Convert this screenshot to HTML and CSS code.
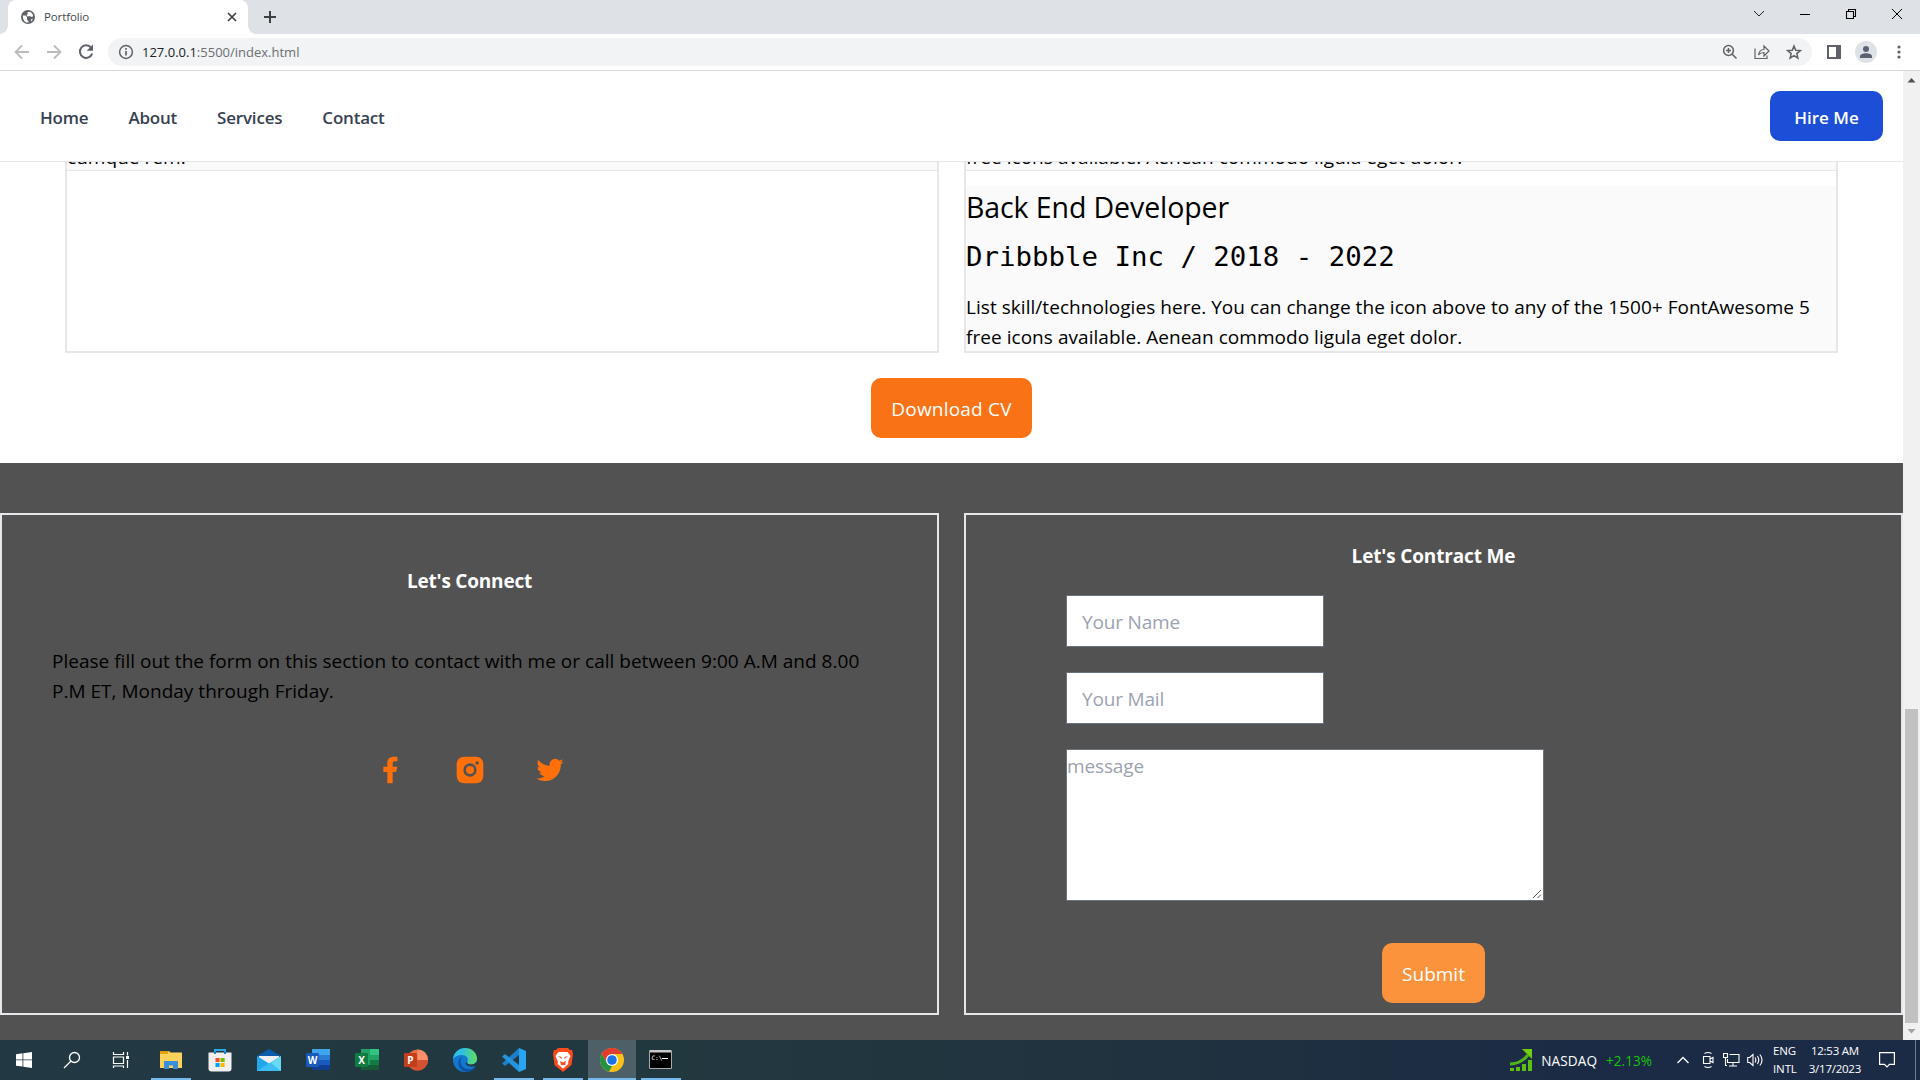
FILE: index.html
```html
<!DOCTYPE html>
<html lang="en">
<head>
<meta charset="utf-8">
<title>Portfolio</title>
<link rel="stylesheet" href="styles.css">
</head>
<body>
<div class="screen">
  <header class="tabs">
    <div class="tab">
      <svg class="globe" width="14" height="14" viewBox="0 0 14 14"><circle cx="7" cy="7" r="7" fill="#5f6368"/><path d="M2 5.500h2.500l1.500 1.500v2.500l1.500 2v1C4 13 1.500 10 2 5.500zM6 2.500l3-.8c1.500 1 3 2 3.200 4.500l-1.700.8-1.500-1-2.500.5-1-1.500 1.500-1zM10 9.500l1.800-1c-.3 1.500-1 2.500-2 3z" fill="#fff"/></svg>
      <span class="tab-title">Portfolio</span>
      <svg class="tab-close" width="10" height="10" viewBox="0 0 10 10"><path d="M1 1l8 8M9 1L1 9" stroke="#3c4043" stroke-width="1.700"/></svg>
    </div>
    <svg class="plus" width="12" height="12" viewBox="0 0 12 12"><path d="M6 0v12M0 6h12" stroke="#3c4043" stroke-width="2"/></svg>
    <div class="window-controls">
      <svg width="12" height="12" viewBox="0 0 12 12"><path d="M1 3l5 5 5-5" fill="none" stroke="#222"/></svg>
      <svg width="12" height="12" viewBox="0 0 12 12"><path d="M1 6.500h10" stroke="#000"/></svg>
      <svg width="12" height="12" viewBox="0 0 12 12"><path d="M1.500 3.500h7v7h-7zM3.500 3V1.500h7v7H9" fill="none" stroke="#000" stroke-width="1.100"/></svg>
      <svg width="12" height="12" viewBox="0 0 12 12"><path d="M1 1l10 10M11 1L1 11" stroke="#000"/></svg>
    </div>
  </header>
  <div class="toolbar">
    <svg class="nav-arrow" width="16" height="16" viewBox="0 0 16 16"><path d="M15 8H2M8 1.500L1.500 8 8 14.500" fill="none" stroke="#babcbe" stroke-width="1.800"/></svg>
    <svg class="nav-arrow" width="16" height="16" viewBox="0 0 16 16"><path d="M1 8h13M8 1.500L14.500 8 8 14.500" fill="none" stroke="#babcbe" stroke-width="1.800"/></svg>
    <svg class="reload" width="16" height="16" viewBox="0 0 16 16"><path d="M13 3.500A6.300 6.300 0 1 0 14.200 9.500" fill="none" stroke="#5f6368" stroke-width="2"/><path d="M15 .5v6.300H8.700z" fill="#5f6368"/></svg>
    <div class="omnibox">
      <svg class="info" width="16" height="16" viewBox="0 0 16 16"><circle cx="8" cy="8" r="6.400" fill="none" stroke="#5f6368" stroke-width="1.500"/><path d="M8 7v4.500M8 4v1.700" stroke="#5f6368" stroke-width="1.700"/></svg>
      <span class="url"><b>127.0.0.1</b>:5500/index.html</span>
      <div class="omni-icons">
        <svg width="16" height="16" viewBox="0 0 16 16"><circle cx="6.500" cy="6.500" r="4.900" fill="none" stroke="#5f6368" stroke-width="1.500"/><path d="M10 10l4.500 4.500M6.500 4v5M4 6.500h5" fill="none" stroke="#5f6368" stroke-width="1.500"/></svg>
        <svg width="16" height="16" viewBox="0 0 16 16"><path d="M1 4.500v10h12v-3M4.500 11C5 7.500 7 5.500 10 5.500V2l5 5-5 5V8.500C7.500 8.500 6 9 4.500 11z" fill="none" stroke="#5f6368" stroke-width="1.200"/></svg>
        <svg width="16" height="16" viewBox="0 0 16 16"><path d="M8 2l1.700 4.300 4.600.3-3.500 3 1.100 4.500L8 11.600l-3.900 2.500 1.100-4.500-3.500-3 4.600-.3z" fill="none" stroke="#5f6368" stroke-width="1.500"/></svg>
      </div>
    </div>
    <svg class="panel" width="14" height="14" viewBox="0 0 14 14"><path fill="#5f6368" d="M0 0h14v14H0z"/><path fill="#fff" d="M2 2h7v10H2z"/></svg>
    <svg class="avatar" width="22" height="22" viewBox="0 0 22 22"><circle cx="11" cy="11" r="11" fill="#dee1e6"/><circle cx="11" cy="8" r="3" fill="#5a6272"/><path d="M5 17v-1.500c0-2 3-3.200 6-3.200s6 1.200 6 3.200V17z" fill="#5a6272"/></svg>
    <svg class="kebab" width="4" height="14" viewBox="0 0 4 14"><g fill="#5f6368"><circle cx="2" cy="2" r="1.600"/><circle cx="2" cy="7" r="1.600"/><circle cx="2" cy="12" r="1.600"/></g></svg>
  </div>
  <div class="viewport">
    <main class="page">
      <nav class="navbar">
        <a>Home</a><a>About</a><a>Services</a><a>Contact</a>
        <button class="hire">Hire Me</button>
      </nav>
      <section class="resume">
        <div class="card">
          <div class="entry clipped"><p>cumque rem.</p></div>
        </div>
        <div class="card">
          <div class="entry clipped"><p>free icons available. Aenean commodo ligula eget dolor.</p></div>
          <div class="entry">
            <h3>Back End Developer</h3>
            <pre>Dribbble Inc / 2018 - 2022</pre>
            <p><span>List skill/technologies here. You can change the icon above to any of the 1500+ FontAwesome 5</span><br><span>free icons available. Aenean commodo ligula eget dolor.</span></p>
          </div>
        </div>
      </section>
      <div class="download"><button class="btn cv">Download CV</button></div>
      <footer class="contact">
        <div class="box connect">
          <h4 class="tight">Let's Connect</h4>
          <p><span>Please fill out the form on this section to contact with me or call between 9:00 A.M and 8.00</span><br><span>P.M ET, Monday through Friday.</span></p>
          <div class="social">
            <svg width="32" height="32" viewBox="0 0 24 24"><path d="M14 13.500h2.500l1-4H14v-2c0-1.030 0-2 2-2h1.500V2.140c-.326-.043-1.557-.14-2.857-.14C11.928 2 10 3.657 10 6.700v2.800H7v4h3V22h4z"/></svg>
            <svg width="32" height="32" viewBox="0 0 24 24"><rect x="2" y="2" width="20" height="20" rx="5.500"/><circle cx="12" cy="12" r="4" fill="none" stroke="#525252" stroke-width="2"/><circle cx="17.300" cy="6.700" r="1.300" fill="#525252"/></svg>
            <svg width="32" height="32" viewBox="0 0 24 24"><path d="M22.162 5.656a8.384 8.384 0 0 1-2.402.658A4.196 4.196 0 0 0 21.600 4c-.82.488-1.719.83-2.656 1.015a4.182 4.182 0 0 0-7.126 3.814 11.874 11.874 0 0 1-8.620-4.370 4.168 4.168 0 0 0-.566 2.103c0 1.450.738 2.731 1.860 3.481a4.168 4.168 0 0 1-1.894-.523v.052a4.185 4.185 0 0 0 3.355 4.101 4.210 4.210 0 0 1-1.890.072A4.185 4.185 0 0 0 7.970 16.650a8.394 8.394 0 0 1-6.191 1.732 11.830 11.830 0 0 0 6.410 1.880c7.693 0 11.900-6.373 11.900-11.900 0-.18-.005-.362-.013-.540a8.496 8.496 0 0 0 2.087-2.165z"/></svg>
          </div>
        </div>
        <div class="box form">
          <h4>Let's Contract Me</h4>
          <div class="field">Your Name</div>
          <div class="field">Your Mail</div>
          <div class="area">message<svg width="10" height="10" viewBox="0 0 10 10"><path d="M1 9l8-8M5.500 9L9 5.500" stroke="#555"/></svg></div>
          <button class="btn submit">Submit</button>
        </div>
      </footer>
    </main>
    <div class="scrollbar">
      <svg width="9" height="5" viewBox="0 0 9 5"><path d="M4.500 0L8.500 4.500h-8z" fill="#505050"/></svg>
      <div class="thumb"></div>
      <svg width="9" height="5" viewBox="0 0 9 5"><path d="M4.500 4.500L.5 0h8z" fill="#a3a3a3"/></svg>
    </div>
  </div>
  <div class="taskbar">
    <div class="sys">
      <svg width="16" height="16" viewBox="0 0 16 16"><path fill="#fff" d="M0 2.200L6.500 1.300v6.200H0zM7.300 1.200L16 0v7.500H7.300zM0 8.300h6.500v6.300L0 13.700zM7.300 8.300H16V16l-8.700-1.200z"/></svg>
      <svg width="18" height="18" viewBox="0 0 18 18"><circle cx="11.500" cy="6.500" r="5" fill="none" stroke="#fff" stroke-width="1.300"/><path d="M8 10L1 17" stroke="#fff" stroke-width="1.300"/></svg>
      <svg width="18" height="18" viewBox="0 0 18 18"><path d="M1.500 1v2.500h10V1M1.500 6h10v6.500h-10zM1.500 17v-2h10v2M15.500 1v3.500M15.500 9v8" fill="none" stroke="#fff" stroke-width="1.200"/><path fill="#fff" d="M14 5h3v3h-3z"/></svg>
    </div>
    <div class="apps">
      <div class="app open"><svg width="24" height="24" viewBox="0 0 24 24"><path d="M1 3h9l1.500 1.500H23V20H1z" fill="#ffd35b"/><path d="M1 3h9l-1.500 3H1z" fill="#e09f0c"/><path d="M5 21v-8h14v8h-5v-3.500h-4V21z" fill="#3a8fd8"/></svg></div>
      <div class="app"><svg width="24" height="24" viewBox="0 0 24 24"><path d="M7 6V2h10v4" fill="none" stroke="#29a9e8" stroke-width="2"/><path d="M.5 4.500h23v16q0 3-3 3h-17q-3 0-3-3z" fill="#f0f0f0"/><path d="M6 3.500h2V6H6zM16 3.500h2V6h-2z" fill="#1685c4"/><path d="M7.500 10H11.600v4H7.500z" fill="#f25022"/><path d="M12.500 10h4.200v4h-4.200z" fill="#7fba00"/><path d="M7.500 15H11.600v4H7.500z" fill="#00a4ef"/><path d="M12.500 15h4.200v4h-4.200z" fill="#ffb900"/></svg></div>
      <div class="app"><svg width="24" height="24" viewBox="0 0 24 24"><path d="M0 8l12-7 12 7v4H0z" fill="#0a5cad"/><path d="M2 8h20v9H2z" fill="#eef0f2"/><path d="M0 8l24 15H0z" fill="#22a7ea"/><path d="M24 8v15H0l11-7z" fill="#3dbdf3"/><path d="M24 8v15l-10-8z" fill="#66d9f5"/></svg></div>
      <div class="app"><svg width="24" height="24" viewBox="0 0 24 24"><path d="M6 1h18v6H6z" fill="#41a5ee"/><path d="M6 7h18v5H6z" fill="#2b7cd3"/><path d="M6 12h18v5H6z" fill="#185abd"/><path d="M6 17h18v5H6z" fill="#103f91"/><rect y="5" width="13" height="14" rx="1" fill="#185abd"/><text x="6.500" y="16" class="letter">W</text></svg></div>
      <div class="app"><svg width="24" height="24" viewBox="0 0 24 24"><path d="M6 1h18v21H6z" fill="#21a366"/><path d="M15 1h9v6h-9z" fill="#33c481"/><path d="M15 12h9v5h-9z" fill="#107c41"/><path d="M6 17h18v5H6z" fill="#185c37"/><rect y="5" width="13" height="14" rx="1" fill="#107c41"/><text x="6.500" y="16" class="letter">X</text></svg></div>
      <div class="app"><svg width="24" height="24" viewBox="0 0 24 24"><circle cx="13.500" cy="12" r="10.500" fill="#ed6c47"/><path d="M13.500 1.500A10.500 10.500 0 0 1 24 12H13.500z" fill="#ff8f6b"/><path d="M3 12h21a10.500 10.500 0 0 1-21 0z" fill="#d35230"/><rect y="5" width="13" height="14" rx="1" fill="#c43e1c"/><text x="6.500" y="16" class="letter">P</text></svg></div>
      <div class="app"><svg width="24" height="24" viewBox="0 0 24 24"><defs><linearGradient id="edge" x1="0" x2="1"><stop offset=".4" stop-color="#2fbfe0"/><stop offset="1" stop-color="#62e05a"/></linearGradient></defs><circle cx="12" cy="12" r="12" fill="#1377cf"/><path d="M0 11C1 4 6 0 12 0c7 0 12 5 12 10.500 0 4-3 6-6 6-3.500 0-4.500-1.500-3.500-3C16 10 13 7 9 7c-4 0-7 1.500-9 4z" fill="url(#edge)"/><path d="M9 9c-3 4-1.500 11 5 12 4 .5 7-.5 9-3-4 8-13 7-16 2C4.500 16 5 11 9 9z" fill="#0c4f9e"/><path d="M14.500 13.500c-1 1.500 0 3 3.500 3 2.500 0 4.500-1 5.500-3l.5 3.500c-4 3-11 1.500-11.500-2z" fill="#223944"/></svg></div>
      <div class="app open"><svg width="24" height="24" viewBox="0 0 24 24"><path d="M17 0l7 3v18l-7 3z" fill="#28a5f2"/><path d="M17 0v7L3 18l-3-2.500z" fill="#1b80c9"/><path d="M17 24v-7L3 6 0 8.500z" fill="#2494e0"/></svg></div>
      <div class="app open"><svg width="24" height="24" viewBox="0 0 24 24"><path d="M7 0h10l2 2h2l1 4-1.500 11L12 24 3.500 17 2 6l1-4h2z" fill="#fb4a1c"/><path d="M7.500 4h9l3 4-2.500 6 .5 2-5.500 4.500L6.500 16l.5-2-2.500-6z" fill="#fff"/><path d="M7 8l3.500 1v2zM17 8l-3.500 1v2zM9 13l3 1.500 3-1.500-1 4h-4z" fill="#fb4a1c"/></svg></div>
      <div class="app open active"><svg width="24" height="24" viewBox="0 0 24 24"><circle cx="12" cy="12" r="12" fill="#fbc116"/><path d="M1.600 6A12 12 0 0 1 22.400 6H12l-5.200 9z" fill="#e33b2e"/><path d="M1.600 6l5.200 9 5.200 3-3 5.600A12 12 0 0 1 1.600 6z" fill="#229342"/><circle cx="12" cy="12" r="6" fill="#fff"/><circle cx="12" cy="12" r="4.800" fill="#1a73e8"/></svg></div>
      <div class="app open"><svg width="24" height="24" viewBox="0 0 24 24"><path d="M.5 2.500h22v18H.5z" fill="#000" stroke="#aaa"/><path d="M1 2h21v2.500H1z" fill="#c9c9c9"/><text x="2.500" y="11.500" class="prompt">C:\</text><path d="M13 10.500h6" stroke="#fff"/></svg></div>
    </div>
    <div class="tray">
      <svg class="stock" width="23" height="22" viewBox="0 0 23 22"><path d="M0 15C8 15 14 11 18 6" fill="none" stroke="#4fb51a" stroke-width="3"/><path d="M12 0h10v10z" fill="#70cf10"/><path d="M0 19h4v3H0zM6 18h4v4H6zM12 15h4v7h-4zM18 11h4v11h-4z" fill="#5bc014"/></svg>
      <span class="nasdaq">NASDAQ</span><span class="gain">+2.13%</span>
      <svg class="chev" width="12" height="8" viewBox="0 0 12 8"><path d="M.5 7L6 1.500 11.500 7" fill="none" stroke="#fff" stroke-width="1.300"/></svg>
      <svg class="meet" width="12" height="18" viewBox="0 0 12 18"><path d="M1.500 5.500h6.500v7H1.500zM8 8l3-1.500v5L8 10M2.500 2.500q3.500-2 7 0M2.500 15.500q3.500 2 7 0" fill="none" stroke="#fff" stroke-width="1.100"/></svg>
      <svg class="net" width="17" height="14" viewBox="0 0 17 14"><path d="M6.500 1.500h9.500v8H4.500V6M10 10v3M6 13h8M.5.500h4v4h-4zM2.500 4.500v8H4" fill="none" stroke="#fff" stroke-width="1.100"/></svg>
      <svg class="vol" width="17" height="16" viewBox="0 0 17 16"><path d="M.7 5.500h2L6 2.500v11l-3.300-3h-2zM8 5.500q1.700 2.500 0 5M10.300 4q3 4 0 8M12.800 2.500q4.500 5.500 0 11" fill="none" stroke="#fff" stroke-width="1.100"/></svg>
      <div class="lang"><span>ENG</span><span>INTL</span></div>
      <div class="clock"><span>12:53 AM</span><span>3/17/2023</span></div>
      <svg class="note" width="16" height="17" viewBox="0 0 16 17"><path d="M.6.6h14.800v11.800H10.500L8 15l-2.500-2.600H.6z" fill="none" stroke="#fff" stroke-width="1.200"/></svg>
      <i class="peek"></i>
    </div>
  </div>
</div>
</body>
</html>
```
FILE: styles.css
```css
* { box-sizing: border-box; margin: 0; }
body { font-family: "Open Sans", "Noto Sans", sans-serif; font-size: 19px; color: #000; overflow: hidden; }
svg { display: block; flex: none; }
button { border: 0; padding: 0; font: inherit; color: #fff; white-space: nowrap; }
span { white-space: nowrap; }
.screen { width: 1920px; height: 1080px; display: flex; flex-direction: column; background: #fff; }

.tabs { height: 34px; flex: none; background: #dee1e6; display: flex; align-items: flex-start; padding-left: 8px; }
.tab { position: relative; width: 240px; height: 34px; background: #fff; border-radius: 8px 8px 0 0; display: flex; align-items: center; padding: 0 11px 0 13px; }
.tab::before, .tab::after { content: ""; position: absolute; bottom: 0; width: 8px; height: 8px; }
.tab::before { left: -8px; background: radial-gradient(circle at 0 0, #dee1e6 7.500px, #fff 8px); }
.tab::after { right: -8px; background: radial-gradient(circle at 100% 0, #dee1e6 7.500px, #fff 8px); }
.tab-title { margin-left: 9px; font-size: 11.500px; line-height: 16px; letter-spacing: -.12px; color: #45494d; }
.tab-close { margin-left: auto; }
.plus { margin: 11px 0 0 16px; }
.window-controls { margin: 8px 17px 0 auto; display: flex; gap: 34px; }

.toolbar { height: 37px; flex: none; border-bottom: 1px solid #d5d7da; display: flex; align-items: center; padding: 0 19px 0 14px; }
.nav-arrow { margin-right: 16px; }
.omnibox { margin-left: 14px; width: 1704px; flex: none; height: 28px; border-radius: 14px; background: #f1f3f4; display: flex; align-items: center; padding: 0 10px; }
.url { margin-left: 8px; font-size: 13px; line-height: 20px; color: #6a6e73; }
.url b { font-weight: 400; color: #202124; }
.omni-icons { margin-left: auto; display: flex; gap: 16px; }
.panel { margin-left: 15px; }
.avatar { margin-left: 14px; }
.kebab { margin-left: auto; }

.viewport { height: 969px; flex: none; display: flex; }
.page { width: 1903px; display: flex; flex-direction: column; }
.navbar { height: 91px; flex: none; border-bottom: 1px solid #e5e7eb; display: flex; align-items: center; gap: 40px; padding: 0 20px 0 40px; font-size: 17px; font-weight: 600; letter-spacing: -.2px; color: #374151; }
.navbar a { padding-top: 2px; }
.hire { margin-left: auto; width: 113px; height: 50px; padding-top: 2px; border-radius: 10px; background: #1d4ed8; }

.resume { height: 191px; flex: none; display: grid; grid-template-columns: 874px 874px; gap: 25px; padding-left: 65px; }
.card { border: 2px solid #e5e7eb; border-top: 0; display: flex; flex-direction: column; gap: 15px; }
.entry { background: #fafafa; flex: 1; }
.entry p { line-height: 30px; letter-spacing: .045px; }
.entry h3 { font-weight: 400; font-size: 28.500px; line-height: 43px; letter-spacing: -.1px; }
.entry pre { font-family: "DejaVu Sans Mono", monospace; font-size: 27.400px; line-height: 45px; width: max-content; margin: 5px 0 13px; }
.entry pre + p { margin-bottom: -1px; }
.entry.clipped { flex: none; height: 9px; overflow: hidden; border-bottom: 1px solid #e5e7eb; display: flex; align-items: flex-end; }
.clipped p { margin-bottom: -2px; }

.download { height: 110px; flex: none; padding-top: 25px; display: flex; justify-content: center; }
.btn { height: 60px; padding-top: 1px; border-radius: 10px; }
.cv { width: 161px; background: #f97316; letter-spacing: .2px; }

.contact { flex: 1; background: #525252; padding: 50px 0 25px; display: grid; grid-template-columns: 939px 939px; gap: 25px; }
.box { border: 2px solid #e5e7eb; display: flex; flex-direction: column; height: 502px; }
.box h4 { font-size: 19px; line-height: 30px; letter-spacing: -.15px; color: #fff; align-self: center; }
.box .tight { letter-spacing: -.2px; }
.connect { padding: 51px 50px 0; }
.connect p { margin-top: 50px; line-height: 30px; letter-spacing: .015px; }
.social { margin-top: 48px; display: flex; justify-content: center; gap: 48px; fill: #ff6f0a; }
.form { padding: 26px 100px 10px; }
.field { margin-top: 25px; width: 258px; height: 52px; border: 1px solid #6b7280; background: #fff; color: #9ca3af; display: flex; align-items: center; padding: 2px 0 0 15px; letter-spacing: -.17px; }
.form h4 { margin-bottom: -1px; }
.area { position: relative; margin-top: 25px; width: 478px; height: 152px; border: 1px solid #6b7280; background: #fff; color: #9ca3af; line-height: 32px; letter-spacing: -.13px; }
.area svg { position: absolute; right: 1px; bottom: 1px; }
.submit { width: 103px; margin: 42px auto 0; background: #fb923c; }

.scrollbar { width: 17px; background: #f1f1f1; display: flex; flex-direction: column; align-items: center; padding: 7px 0 6px; }
.thumb { width: 13px; height: 314px; margin: auto 0 6px; background: #c1c1c1; }

.taskbar { height: 40px; flex: none; display: flex; background: linear-gradient(90deg, #223944, #22383f 35%, #20323f 60%, #1b2a45 85%, #1b2a45); color: #fff; }
.sys { width: 146px; display: flex; align-items: center; gap: 31px; padding-left: 16px; }
.apps { display: flex; }
.app { width: 49px; display: flex; justify-content: center; align-items: center; position: relative; }
.open::after { content: ""; position: absolute; bottom: 0; left: 5px; right: 4px; height: 2px; background: #76b9ed; }
.active { background: linear-gradient(#4d6068, #4d6068) 1px 0 no-repeat; }
.active::after { left: 1px; right: 0; }
.letter { font: bold 10px "Open Sans", sans-serif; fill: #fff; text-anchor: middle; }
.prompt { font: 6px "DejaVu Sans Mono", monospace; fill: #fff; }
.tray { margin-left: auto; display: flex; align-items: center; font-size: 13.600px; }
.nasdaq { margin-left: 8px; letter-spacing: .1px; }
.gain { margin-left: 9px; color: #16c60c; }
.chev { margin-left: 25px; }
.meet { margin-left: 13px; }
.net { margin-left: 9px; }
.vol { margin-left: 7px; }
.lang, .clock { display: flex; flex-direction: column; align-items: center; font-size: 11.500px; line-height: 18px; letter-spacing: -.1px; }
.lang { margin-left: 9px; align-items: flex-start; }
.clock { margin-left: 12px; letter-spacing: -.25px; }
.note { margin-left: 18px; }
.peek { margin-left: 20px; width: 1px; height: 40px; background: #6f7a8c; margin-right: 4px; }
```
